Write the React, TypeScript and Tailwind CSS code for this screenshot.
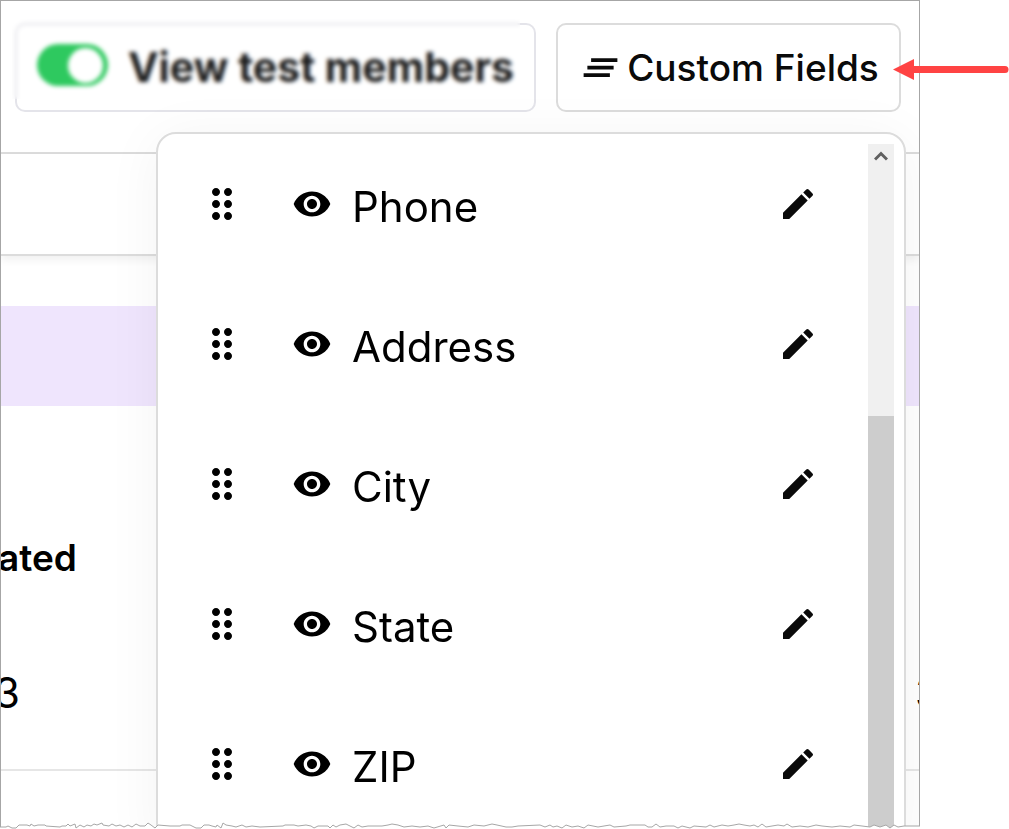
import { MdClearAll, MdDragIndicator, MdEdit, MdVisibility } from "react-icons/md";

const fields = ["Phone", "Address", "City", "State", "ZIP"];

// x, y pairs of the ragged bottom edge
const tornEdge =
  "0,5 6,5 8,4 12,6 16,6 19,3 27,3 30,4 31,2 34,4 38,3 45,3 46,4 60,5 62,4 66,4 68,2 70,4 75,2 76,6 80,3 84,5 87,3 91,4 94,2 97,3 102,1 103,3 109,4 112,2 116,4 120,3 124,5 128,3 132,5 136,2 140,4 145,4 148,1 151,3 155,6 158,3 170,4 180,4 182,3 190,3 194,5 196,6 201,6 204,3 209,3 212,4 216,5 217,3 221,6 223,1 226,3 232,4 236,5 242,3 246,5 252,4 260,5 283,4 285,3 294,3 298,4 306,3 311,4 314,6 318,4 328,4 330,6 333,3 336,5 340,3 346,2 350,4 354,6 358,3 362,5 368,4 382,4 388,3 392,2 398,3 404,5 412,4 420,5 428,4 434,6 444,3 446,6 449,3 458,4 468,5 474,3 484,4 488,3 492,2 497,3 506,5 512,5 518,4 540,3 545,5 550,3 553,5 557,4 562,6 566,3 572,5 578,4 584,6 588,3 598,5 604,4 610,3 614,5 626,4 630,3 645,3 648,5 652,5 656,2 660,5 666,4 674,4 678,6 682,4 690,6 694,4 706,5 710,3 714,5 722,3 728,4 734,3 739,2 744,3 750,4 754,3 758,5 762,2 766,5 772,4 778,3 784,4 787,2 792,5 800,4 808,5 816,3 822,4 832,5 840,4 850,5 854,3 862,4 870,5 874,3 880,5 886,3 890,6 894,3 898,5 904,4 920,4";

function Toolbar() {
  return (
    <header className="flex h-[153px] items-start justify-end gap-5 border-b-2 border-[#dcdcdc] pt-[22px] pr-[18px]">
      <div className="relative flex h-[89px] w-[521px] rounded-[10px] border-2 border-[#e4e4ea] pt-[13px] pl-5">
        <label className="flex h-[60px] items-center gap-5 whitespace-nowrap text-[41px] font-bold text-[#1c1c1c]">
          <input type="checkbox" defaultChecked className="sr-only" />
          <span className="mb-[6px] flex h-[42px] w-[71px] items-center justify-end rounded-full bg-[#2ec95f] pr-[5px]">
            <span className="size-[35px] rounded-full bg-white" />
          </span>
          View test members
        </label>
        <div className="absolute -top-[6px] right-[14px] bottom-[11px] -left-[5px] backdrop-blur-[2px]" />
      </div>
      <button className="flex h-[89px] w-[345px] items-center justify-center gap-1 whitespace-nowrap rounded-[10px] border-2 border-[#dcdcdc] text-[37px] font-medium text-[#0a0a0a]">
        <MdClearAll size={45} />
        Custom Fields
      </button>
    </header>
  );
}

function FieldsMenu() {
  return (
    <div className="absolute top-[131px] right-[13px] left-[155px] flex h-[720px] rounded-[20px] border-2 border-[#dcdcdc] bg-white shadow-[0_6px_56px_rgba(0,0,0,0.05)]">
      <ul className="flex-1">
        {fields.map((field) => (
          <li key={field} className="flex h-[140px] items-center pr-[50px] pl-10 text-[42px]">
            <button aria-label={`Move ${field}`}>
              <MdDragIndicator size={48} />
            </button>
            <button aria-label={`Show ${field}`} className="mr-5 ml-[46px]">
              <MdVisibility size={40} />
            </button>
            <span className="flex-1 pt-1">{field}</span>
            <button aria-label={`Edit ${field}`} className="text-[#0a0a0a]">
              <MdEdit size={40} />
            </button>
          </li>
        ))}
      </ul>
      <div className="mt-[10px] mr-[10px] flex w-[26px] flex-col bg-[#f0f0f0]">
        <div className="flex h-[272px] justify-center pt-[7px]">
          <svg width="14" height="10" viewBox="0 0 14 10" className="text-[#606060]">
            <path d="M1 8.5 L7 2.5 L13 8.5" fill="none" stroke="currentColor" strokeWidth="3" />
          </svg>
        </div>
        <div className="flex-1 bg-[#cdcdcd]" />
      </div>
    </div>
  );
}

export default function App() {
  return (
    <div className="relative bg-white pr-[89px] font-['Inter','Liberation_Sans',sans-serif] text-black">
      <main className="relative h-[829px] overflow-hidden border-x border-t border-[#a6a6a6]">
        <Toolbar />
        <div className="h-[102px] border-b-2 border-[#dcdcdc] shadow-[0_4px_8px_rgba(0,0,0,0.06)]" />
        <div className="mt-[50px] h-[100px] bg-[#efe5fd]" />
        <div className="flex h-[365px] flex-col border-b-2 border-[#e6e6e6] pt-[125px]">
          <span className="-ml-[3px] text-[37px] leading-[54px] font-semibold">ated</span>
          <div className="mt-20 -mr-[22px] -ml-[7px] flex justify-between text-[42px] leading-[56px]">
            <span>3</span>
            <span>3</span>
          </div>
        </div>
        <FieldsMenu />
      </main>
      <svg
        viewBox="0 0 920 7"
        preserveAspectRatio="none"
        className="absolute bottom-0 left-0 h-[7px] w-[calc(100%-89px)]"
      >
        <polygon points={`${tornEdge} 920,7 0,7`} fill="#fff" />
        <polyline points={tornEdge} fill="none" stroke="#a6a6a6" />
      </svg>
      <svg width="118" height="24" viewBox="0 0 118 24" className="absolute top-[57px] right-0 text-[#ff4343]">
        <path d="M2 12.5 L23 2 V23 Z" fill="currentColor" />
        <path d="M20 12.5 H114" stroke="currentColor" strokeWidth="7" strokeLinecap="round" />
      </svg>
    </div>
  );
}
